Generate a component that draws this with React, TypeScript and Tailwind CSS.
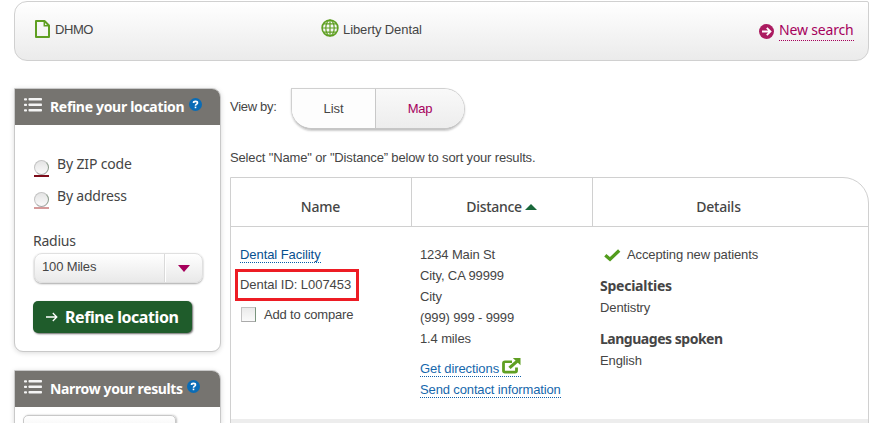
import type { ReactNode } from "react";

const heading = "font-['Noto_Sans',sans-serif]";

function HelpBadge() {
  return (
    <svg width="13" height="13" viewBox="0 0 13 13" className="block shrink-0">
      <circle cx="6.5" cy="6.5" r="6.5" fill="#0a6cb6" />
      <path d="M4.5 4.9C4.5 2.8 8.5 2.8 8.5 4.9C8.5 6.3 6.5 6.1 6.5 7.7" fill="none" stroke="#fff" strokeWidth="1.6" />
      <rect x="5.7" y="8.6" width="1.6" height="1.6" fill="#fff" />
    </svg>
  );
}

function ListIcon() {
  return (
    <svg width="18" height="14" viewBox="0 0 18 14" className="block shrink-0" fill="#f4f4f4">
      {[0, 5.5, 11].map((y) => (
        <g key={y}>
          <rect x="0" y={y + 0.2} width="3" height="2.4" rx=".8" />
          <rect x="4.5" y={y} width="13.5" height="2.6" rx=".8" />
        </g>
      ))}
    </svg>
  );
}

function PanelTitle({ children, className }: { children: ReactNode; className: string }) {
  return (
    <div className="flex h-9 items-start rounded-tr-[8px] bg-[#767470] pl-[9px] text-white">
      <div className="pt-[9px]"><ListIcon /></div>
      <h2 className={`${heading} ml-[8px] mt-[7px] whitespace-nowrap text-[14px] font-bold leading-[22px] ${className}`}>{children}</h2>
      <div className="ml-[4px] mt-[9px]"><HelpBadge /></div>
    </div>
  );
}

function RadioRow({ label, line, className }: { label: string; line: string; className: string }) {
  return (
    <div className="flex h-8 items-start">
      <div className="mt-[7px] w-[15px]">
        <div className="h-[15px] w-[15px] rounded-full border border-[#c4c4c4] border-r-[#8c9b8c] border-b-[#a5a5a5] bg-linear-to-b from-[#e4e4e4] to-[#fafafa]" />
        <div className={`h-[1.5px] ${line}`} />
      </div>
      <span className={`${heading} ml-[8px] whitespace-nowrap text-[14px] leading-[22px] ${className}`}>{label}</span>
    </div>
  );
}

export default function App() {
  return (
    <div className="h-[423px] w-[872px] overflow-hidden bg-white pl-[14px] pt-px font-['Liberation_Sans',Arial,sans-serif] text-[13px] leading-[21px] text-[#454545]">
      <header className="flex h-[60px] w-[855px] items-start rounded-[13px] rounded-tr-[2px] border border-[#d0d0d0] bg-linear-to-b from-white to-[#ebebeb] pl-5">
        <svg width="15" height="18" viewBox="0 0 15 18" className="mt-[18px] block" fill="none" stroke="#5f9f22" strokeWidth="2">
          <path d="M1 1H9.5L14 5.5V17H1Z" strokeLinejoin="round" />
          <path d="M9.3 1V5.7H14" strokeWidth="1.5" />
        </svg>
        <span className="ml-[5px] mt-[17px] w-[266px] tracking-[-0.45px]">DHMO</span>
        <svg width="18" height="18" viewBox="0 0 18 18" className="mt-[17px] block" fill="none" stroke="#5f9f22" strokeWidth="1.2">
          <circle cx="9" cy="9" r="7.9" strokeWidth="1.6" />
          <ellipse cx="9" cy="9" rx="4.2" ry="7.8" />
          <path d="M9 1V17M1 9H17M2.5 4.8H15.5M2.5 13.2H15.5" />
        </svg>
        <span className="ml-[4px] mt-[17px] w-[416px] tracking-[-0.1px]">Liberty Dental</span>
        <svg width="15" height="15" viewBox="0 0 15 15" className="mt-[22px] block">
          <circle cx="7.5" cy="7.5" r="7.5" fill="#ab1b60" />
          <path d="M3 7.5H11.5M7.8 3.8L11.5 7.5L7.8 11.2" fill="none" stroke="#fff" strokeWidth="1.8" />
        </svg>
        <a className={`${heading} ml-[5px] mt-[17px] h-[22px] w-[75px] whitespace-nowrap border-b border-dotted border-[#a6005c] text-[14px] leading-[22px] tracking-[-0.17px] text-[#a6005c]`}>New search</a>
      </header>

      <div className="mt-[27px] flex items-start">
        <aside className="w-[207px] shrink-0">
          <section className="h-[264px] rounded-[9px] rounded-tl-none border border-[#c9c9c9] bg-white shadow-[0_1px_5px_rgba(0,0,0,0.15)]">
            <PanelTitle className="w-[135px] tracking-[-0.32px]">Refine your location</PanelTitle>
            <div className="pl-[19px] pt-[28px]">
              <RadioRow label="By ZIP code" line="bg-[#7d0c1a]" className="tracking-[-0.15px]" />
              <RadioRow label="By address" line="bg-[#d59a9a]" className="tracking-[-0.2px]" />
              <div className={`${heading} mt-[13px] -ml-px h-[23px] text-[14px] leading-[22px] tracking-[-0.25px]`}>Radius</div>
              <div className="flex h-[30px] w-[169px] rounded-[8px] border border-[#e0e0e0] bg-linear-to-b from-white to-[#e9e9e9] shadow-[0_1px_2px_rgba(0,0,0,0.35)]">
                <span className="w-[130px] border-r border-[#dadada] pl-[7px] leading-[26px] tracking-[-0.15px]">100 Miles</span>
                <span className="flex flex-1 items-center justify-center border-l border-white pr-px">
                  <svg width="12" height="7" viewBox="0 0 12 7"><path d="M0 0H12L6 7Z" fill="#a6005c" /></svg>
                </span>
              </div>
              <button className="-ml-px mt-[18px] flex h-8 w-[159px] items-center rounded-[5px] bg-[#1f5c2b] pl-[13px] text-white shadow-[1px_1px_2px_rgba(0,0,0,0.6)]">
                <svg width="12" height="10" viewBox="0 0 12 10" fill="none" stroke="#fff" strokeWidth="1.3"><path d="M0 5H10.5M6.8 1L10.8 5L6.8 9" /></svg>
                <span className={`${heading} ml-[7px] whitespace-nowrap text-[16px] font-bold tracking-[-0.43px]`}>Refine location</span>
              </button>
            </div>
          </section>
          <section className="mt-[18px] h-[100px] rounded-tr-[9px] border border-[#c9c9c9] bg-white shadow-[0_1px_5px_rgba(0,0,0,0.15)]">
            <PanelTitle className="w-[133px] tracking-[-0.36px]">Narrow your results</PanelTitle>
            <div className="ml-2 mt-2 h-[30px] w-[153px] rounded-[5px] border border-[#c8c8c8] bg-linear-to-b from-white to-[#e9e9e9] shadow-[1px_0_2px_rgba(0,0,0,0.25)]" />
          </section>
        </aside>

        <main className="ml-[9px] w-[639px] shrink-0">
          <div className="flex h-[43px]">
            <span className="w-[61px] pt-[8px] tracking-[-0.3px]">View by:</span>
            <div className="flex h-[42px] w-[174px] overflow-hidden rounded-tr-[21px] rounded-br-[21px] rounded-bl-[21px] border border-[#d0d0d0] border-b-2 border-b-[#c6c6c6] text-center shadow-[0_1px_2px_rgba(0,0,0,0.2)]">
              <span className="w-[84px] border-r border-[#c8c8c8] bg-[#fdfdfd] leading-[39px] tracking-[-0.1px]">List</span>
              <span className="flex-1 bg-linear-to-b from-[#f9f9f9] to-[#ededed] leading-[39px] tracking-[-0.2px] text-[#a6005c]">Map</span>
            </div>
          </div>
          <p className="mt-[16px] h-[30px] whitespace-nowrap tracking-[-0.15px]">Select "Name" or "Distance” below to sort your results.</p>
          <div className="h-[260px] rounded-tr-[26px] border border-[#d0d0d0]">
            <div className={`${heading} flex h-[49px] border-b border-[#d0d0d0] text-center text-[14px] font-medium leading-[58px]`}>
              <div className="w-[181px] border-r border-[#d0d0d0] pr-px tracking-[-0.2px]">Name</div>
              <div className="flex w-[181px] items-start justify-center border-r border-[#d0d0d0] pr-px tracking-[-0.3px]">
                Distance
                <svg width="12" height="6" viewBox="0 0 12 6" className="ml-[3px] mt-[26px]"><path d="M0 6L6 0L12 6Z" fill="#19683a" /></svg>
              </div>
              <div className="w-[251px] tracking-[-0.2px]">Details</div>
            </div>
            <div className="flex h-[192px]">
              <div className="w-[180px] pl-[9px] pt-[17px]">
                <a className="block h-[19px] w-[81px] whitespace-nowrap border-b border-dotted border-[#075ca8] tracking-[-0.07px] text-[#07508f]">Dental Facility</a>
                <div className="-ml-[5px] mt-[6px] h-8 w-[124px] whitespace-nowrap border-[3px] border-[#ed1c24] pl-[2px] leading-[25px] tracking-[-0.05px]">Dental ID: L007453</div>
                <div className="mt-[3px] flex">
                  <span className="ml-px mt-[3px] h-[15px] w-[15px] border border-[#c2c2c2] border-r-[#79947d] border-b-[#aaa] bg-linear-to-b from-[#eaeaea] to-[#fafafa]" />
                  <span className="ml-2 tracking-[-0.18px]">Add to compare</span>
                </div>
              </div>
              <div className="w-[180px] whitespace-nowrap pl-[9px] pt-[17px] tracking-[-0.13px]">
                <div>1234 Main St</div>
                <div>City, CA 99999</div>
                <div>City</div>
                <div>(999) 999 - 9999</div>
                <div>1.4 miles</div>
                <a className="mt-[9px] flex h-[19px] w-[101px] border-b border-dotted border-[#1260a8] text-[#1667ac]">
                  <span className="w-[82px] tracking-[-0.08px]">Get directions</span>
                  <svg width="19" height="16" viewBox="0 0 19 17" preserveAspectRatio="none" className="block shrink-0" fill="none" stroke="#5f9f22">
                    <path d="M10 4H3Q1.5 4 1.5 5.5V13.5Q1.5 15 3 15H13Q14.5 15 14.5 13.5V10" strokeWidth="2.8" />
                    <path d="M7.5 10.5L15.5 3" strokeWidth="3.2" />
                    <path d="M10.8 0H18.5V7.8Z" fill="#5f9f22" stroke="none" />
                  </svg>
                </a>
                <a className="mt-[2px] block h-[19px] w-[141px] border-b border-dotted border-[#1260a8] text-[#1667ac]">Send contact information</a>
              </div>
              <div className="whitespace-nowrap pl-[9px] pt-[17px] tracking-[-0.12px]">
                <div className="flex">
                  <svg width="17" height="13" viewBox="0 0 17 13" className="ml-1 mt-[5px]"><path d="M1.3 6.3L6 10.3L15.2 1.5" fill="none" stroke="#529c1c" strokeWidth="3.3" /></svg>
                  <span className="ml-[6px]">Accepting new patients</span>
                </div>
                <h3 className={`${heading} mt-[10px] text-[14px] font-bold tracking-[-0.25px]`}>Specialties</h3>
                <div className="mt-px">Dentistry</div>
                <h3 className={`${heading} mt-[10px] text-[14px] font-bold tracking-[-0.48px]`}>Languages spoken</h3>
                <div className="mt-px">English</div>
              </div>
            </div>
            <div className="h-4 bg-[#ededed]" />
          </div>
        </main>
      </div>
    </div>
  );
}
